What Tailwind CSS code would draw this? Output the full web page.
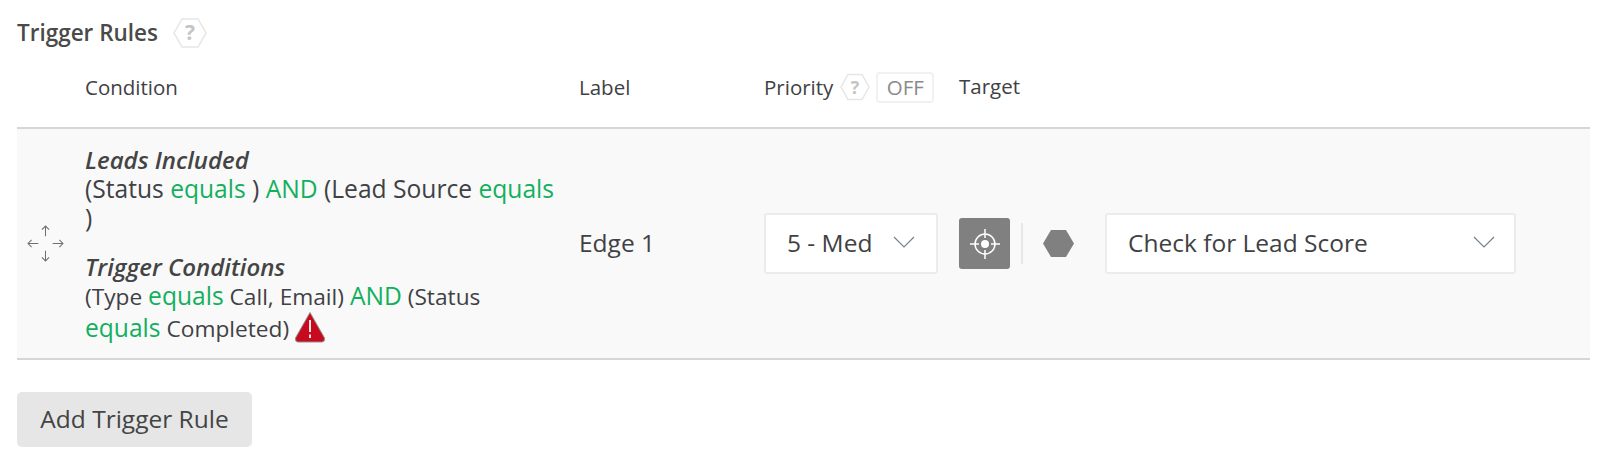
<!DOCTYPE html>
<html lang="en">
<head>
  <meta charset="UTF-8" />
  <title>Trigger Rules</title>
  <script src="https://cdn.jsdelivr.net/npm/@tailwindcss/browser@4"></script>
</head>
<body class="bg-white h-[463px] overflow-hidden font-['Open_Sans',sans-serif] text-[#3f4144]">
  <div class="pl-[17px] pr-[10px] pt-[17px]">

    <div class="flex items-center h-[32px]">
      <h2 class="text-[22.5px] font-semibold text-[#4a4a4a]">Trigger Rules</h2>
      <svg class="ml-[15px] w-[34px] h-[32px]" viewBox="0 0 34 32">
        <path d="M9 2H25L33 16L25 30H9L1 16Z" fill="white" stroke="#e6e6e6" stroke-width="1.5"/>
        <text x="17" y="23" text-anchor="middle" font-size="21" font-weight="700" fill="#c4c4c4" font-family="Open Sans">?</text>
      </svg>
    </div>

    <div class="flex items-center h-[78px] pb-[2px] text-[20.5px]">
      <div class="w-[68px]"></div>
      <div class="w-[494px]">Condition</div>
      <div class="w-[185px]">Label</div>
      <div class="w-[195px] flex items-center">
        <span>Priority</span>
        <svg class="ml-[7px] w-[30px] h-[28px]" viewBox="0 0 30 28">
          <path d="M8 1.500H22L29 14L22 26.500H8L1 14Z" fill="white" stroke="#e6e6e6" stroke-width="1.5"/>
          <text x="15" y="20.500" text-anchor="middle" font-size="18" font-weight="700" fill="#c4c4c4" font-family="Open Sans">?</text>
        </svg>
        <span class="ml-[6px] w-[58px] h-[31px] leading-[27px] text-center border-2 border-[#f1f1f1] rounded-[4px] text-[#8a8a8a] text-[20.5px]">OFF</span>
      </div>
      <div class="-mt-[2px]">Target</div>
    </div>

    <div class="flex items-center h-[233px] bg-[#f9f9f9] border-y-2 border-[#d6d6d6]">
      <div class="w-[68px] pl-[10px]">
        <svg class="w-[37px] h-[37px]" viewBox="0 0 36 36" fill="none" stroke="#6f6f6f" stroke-width="1">
          <path d="M18 1V11M14.500 4.500L18 1L21.500 4.500"/>
          <path d="M18 25V35M14.500 31.500L18 35L21.500 31.500"/>
          <path d="M1 18H11M4.500 14.500L1 18L4.500 21.500"/>
          <path d="M25 18H35M31.500 14.500L35 18L31.500 21.500"/>
        </svg>
      </div>

      <div class="w-[494px] text-[24.6px] leading-[29px]">
        <div class="font-semibold italic text-[24px] text-[#444]">Leads Included</div>
        <div class="w-[480px]">(Status <span class="text-[#12b05e]">equals</span> ) <span class="text-[#12b05e]">AND</span> (Lead Source <span class="text-[#12b05e]">equals</span> )</div>
        <div class="font-semibold italic text-[24px] text-[#444] mt-[20px]">Trigger Conditions</div>
        <div class="w-[420px] text-[22.7px]">(Type <span class="text-[24.6px] text-[#12b05e]">equals</span> Call, Email) <span class="text-[24.6px] text-[#12b05e]">AND</span> (Status <span class="text-[24.6px] text-[#12b05e]">equals</span> Completed)
          <svg class="inline-block align-[-6px] -ml-[1px] w-[32px] h-[32px]" viewBox="0 0 32 32">
            <path d="M16 1.500L30.500 27Q31 31 28 31H4Q1 31 1.500 27Z" fill="#c80a1e" stroke="#8f8f8f" stroke-width="1" stroke-linejoin="round"/>
            <path d="M16 9V21M16 23.500V27" stroke="white" stroke-width="1.800"/>
          </svg>
        </div>
      </div>

      <div class="w-[185px] text-[24.5px]">Edge 1</div>

      <div class="w-[195px]">
        <div class="w-[174px] h-[61px] bg-white border-2 border-[#ececec] rounded-[3px] flex items-center justify-between pl-[21px] pr-[21px] text-[24.5px]">
          <span>5 - Med</span>
          <svg class="w-[22px] h-[12px] -mt-[3px]" viewBox="0 0 22 12" fill="none" stroke="#75818c" stroke-width="1.200"><path d="M1 1L11 11L21 1"/></svg>
        </div>
      </div>

      <div class="w-[51px] h-[51px] bg-[#808080] rounded-[3px] flex items-center justify-center">
        <svg class="w-[32px] h-[32px]" viewBox="0 0 32 32" fill="none" stroke="white">
          <circle cx="16" cy="16" r="10" stroke-width="1.500"/>
          <circle cx="16" cy="16" r="4" fill="white" stroke="none"/>
          <path d="M16 1V10M16 22V31M1 16H10M22 16H31" stroke-width="1.500"/>
        </svg>
      </div>
      <div class="ml-[11px] w-[2px] h-[41px] bg-[#e6e6e6]"></div>
      <svg class="ml-[20px] w-[31px] h-[27px]" viewBox="0 0 31 27"><path d="M8 0H23L31 13.500L23 27H8L0 13.500Z" fill="#808080"/></svg>
      <div class="ml-[31px] w-[411px] h-[61px] bg-white border-2 border-[#ececec] rounded-[3px] flex items-center justify-between pl-[21px] pr-[19px] text-[24.5px]">
        <span>Check for Lead Score</span>
        <svg class="w-[22px] h-[12px] -mt-[3px]" viewBox="0 0 22 12" fill="none" stroke="#75818c" stroke-width="1.200"><path d="M1 1L11 11L21 1"/></svg>
      </div>
    </div>

    <button class="mt-[32px] w-[235px] h-[55px] bg-[#e6e6e6] rounded-[5px] text-[24.5px] text-[#444]">Add Trigger Rule</button>
  </div>
</body>
</html>
